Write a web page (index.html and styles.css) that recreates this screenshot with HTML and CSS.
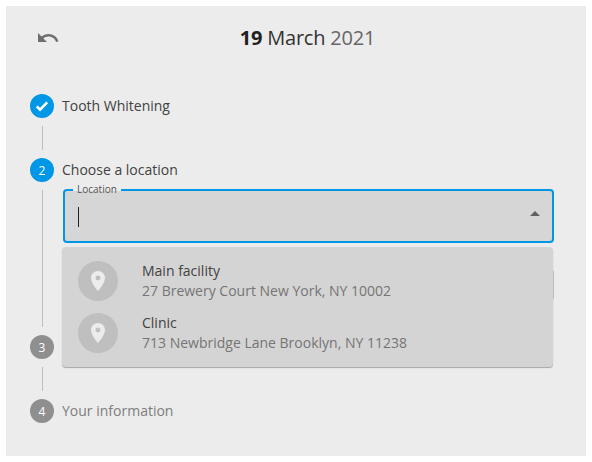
FILE: index.html
```html
<!DOCTYPE html>
<html lang="en">
<head>
<meta charset="utf-8">
<title>Booking</title>
<link rel="stylesheet" href="styles.css">
</head>
<body>
<main class="card">
  <header class="head">
    <button class="back" aria-label="Back">
      <svg viewBox="0 0 24 24" width="24" height="24"><path d="M12.5 8c-2.65 0-5.05.99-6.9 2.6L2 7v9h9l-3.62-3.62c1.39-1.16 3.16-1.88 5.12-1.88 3.54 0 6.55 2.31 7.6 5.5l2.37-.78C21.08 11.03 17.15 8 12.5 8z"/></svg>
    </button>
    <h1 class="date"><b>19</b> March <span class="year">2021</span></h1>
  </header>
  <ol class="steps">
    <li class="step done">
      <div class="row">
        <span class="dot"><svg viewBox="0 0 24 24" width="24" height="24"><path class="tick" d="M6.8 12.4 10 15.6 17.2 8.4"/></svg></span>
        <span class="label">Tooth Whitening</span>
      </div>
      <div class="body short"></div>
    </li>
    <li class="step active">
      <div class="row">
        <span class="dot">2</span>
        <span class="label">Choose a location</span>
      </div>
      <div class="body tall">
        <div class="content">
          <div class="field">
            <span class="legend">Location</span>
            <span class="caret"></span>
            <span class="arrow"></span>
          </div>
          <div class="behind"></div>
          <ul class="menu">
            <li class="option">
              <span class="avatar"><svg viewBox="0 0 24 24" width="24" height="24"><path d="M12 2C8.13 2 5 5.13 5 9c0 5.25 7 13 7 13s7-7.75 7-13c0-3.87-3.13-7-7-7zm0 9.5a2.5 2.5 0 0 1 0-5 2.5 2.5 0 0 1 0 5z"/></svg></span>
              <span class="text"><span class="name">Main facility</span><span class="addr">27 Brewery Court New York, NY 10002</span></span>
            </li>
            <li class="option">
              <span class="avatar"><svg viewBox="0 0 24 24" width="24" height="24"><path d="M12 2C8.13 2 5 5.13 5 9c0 5.25 7 13 7 13s7-7.75 7-13c0-3.87-3.13-7-7-7zm0 9.5a2.5 2.5 0 0 1 0-5 2.5 2.5 0 0 1 0 5z"/></svg></span>
              <span class="text"><span class="name">Clinic</span><span class="addr">713 Newbridge Lane Brooklyn, NY 11238</span></span>
            </li>
          </ul>
        </div>
      </div>
    </li>
    <li class="step">
      <div class="row">
        <span class="dot">3</span>
      </div>
      <div class="body short"></div>
    </li>
    <li class="step">
      <div class="row">
        <span class="dot">4</span>
        <span class="label">Your information</span>
      </div>
    </li>
  </ol>
</main>
</body>
</html>
```
FILE: styles.css
```css
* { box-sizing: border-box; }
html, body { margin: 0; padding: 0; }
body {
  background: #fff;
  padding: 6px;
  font-family: "Open Sans", "Liberation Sans", sans-serif;
  color: #424242;
}
.card {
  width: 580px;
  height: 450px;
  background: #ececec;
  padding: 0 32px 0 24px;
  overflow: hidden;
}
.head {
  height: 64px;
  padding-left: 31px;
  display: flex;
  align-items: center;
  justify-content: center;
  position: relative;
}
.back {
  position: absolute;
  left: 6px;
  top: 20px;
  width: 24px;
  height: 24px;
  padding: 0;
  border: 0;
  background: none;
  display: flex;
}
.back svg { fill: #6e6e6e; }
.date {
  margin: 0;
  font-size: 20px;
  font-weight: 400;
  line-height: 24px;
  letter-spacing: -.2px;
  color: #333;
}
.date b { font-weight: 700; color: #212121; }
.year { color: #666; }
.steps {
  list-style: none;
  margin: 24px 0 0;
  padding: 0;
}
.row {
  display: flex;
  align-items: center;
  height: 24px;
  gap: 8px;
}
.dot {
  width: 24px;
  height: 24px;
  border-radius: 50%;
  background: #8f8f8f;
  color: #fff;
  font-size: 12px;
  display: flex;
  align-items: center;
  justify-content: center;
  flex: none;
}
.tick {
  fill: none;
  stroke: #fff;
  stroke-width: 2.6;
}
.done .dot, .active .dot { background: #0097e6; }
.label {
  font-size: 14px;
  line-height: 20px;
  color: #424242;
}
.step:last-child .label { color: #7d7d7d; }
.body {
  margin: 8px 0 8px 12px;
  border-left: 1px solid #bdbdbd;
}
.short { height: 24px; }
.tall { height: 137px; }
.content {
  position: relative;
  left: 20px;
  top: -1px;
  width: 491px;
}
.field {
  width: 491px;
  height: 54px;
  border: 2px solid #0097e6;
  border-radius: 4px;
  background: #d6d6d6;
  position: relative;
}
.legend {
  position: absolute;
  left: 8px;
  top: -8px;
  padding: 0 4px;
  font-size: 10px;
  line-height: 12px;
  color: #555;
  background: linear-gradient(#ececec 8px, #d6d6d6 8px);
}
.caret {
  position: absolute;
  left: 13px;
  top: 16px;
  width: 1px;
  height: 20px;
  background: #212121;
}
.arrow {
  position: absolute;
  right: 12px;
  top: 20px;
  border-left: 5px solid transparent;
  border-right: 5px solid transparent;
  border-bottom: 5px solid #616161;
}
.behind {
  position: absolute;
  left: 0;
  top: 81px;
  width: 491px;
  height: 30px;
  background: #c4c4c4;
  border-radius: 2px;
}
.menu {
  list-style: none;
  position: absolute;
  left: -1px;
  top: 58px;
  width: 491px;
  height: 120px;
  margin: 0;
  padding: 8px 0;
  background: #d4d4d4;
  border-radius: 4px;
  box-shadow: 0 1px 1px rgba(0, 0, 0, .3);
}
.option {
  height: 52px;
  display: flex;
  align-items: center;
  padding-left: 16px;
}
.avatar {
  width: 40px;
  height: 40px;
  border-radius: 50%;
  background: #bfbfbf;
  display: flex;
  align-items: center;
  justify-content: center;
  margin-right: 24px;
  flex: none;
}
.avatar svg { fill: #ececec; }
.text { display: flex; flex-direction: column; }
.name { font-size: 14px; line-height: 20px; color: #424242; }
.addr { font-size: 14px; line-height: 20px; color: #757575; }
```
